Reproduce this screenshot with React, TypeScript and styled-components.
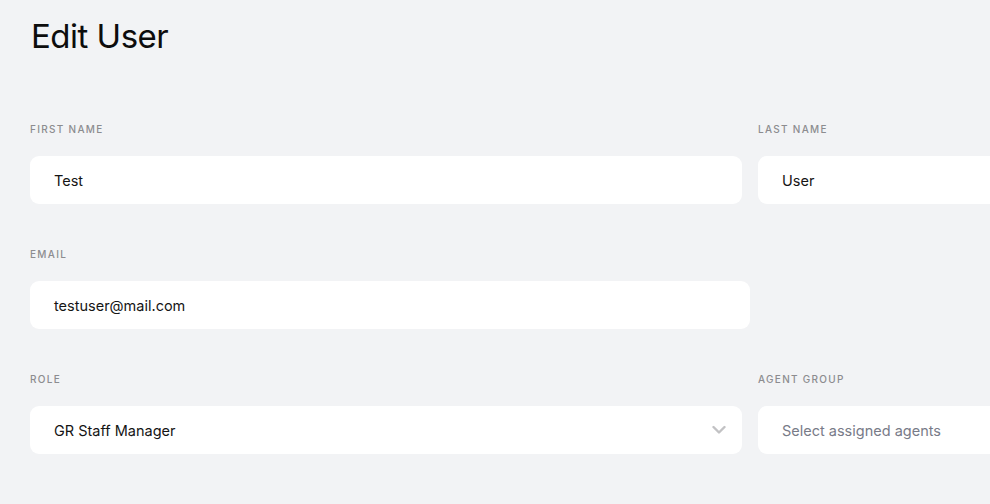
import React from 'react';
import styled, { createGlobalStyle } from 'styled-components';

const GlobalStyle = createGlobalStyle`
  html, body {
    margin: 0;
    padding: 0;
    background: #f2f3f5;
    overflow: hidden;
  }
  body {
    font-family: Inter, "Noto Sans", sans-serif;
    color: #111111;
  }
`;

const Page = styled.div`
  width: 1440px;
  padding: 14px 30px 40px;
`;

const Title = styled.h1`
  margin: 0 0 65px 1px;
  font-size: 33px;
  font-weight: 400;
  letter-spacing: -0.5px;
  line-height: 44px;
  color: #0d0d0d;
`;

const Form = styled.div`
  display: flex;
  flex-direction: column;
  gap: 44px;
`;

const Row = styled.div<{ $single?: boolean }>`
  display: grid;
  grid-template-columns: ${p => (p.$single ? '720px' : '1fr 1fr')};
  column-gap: 16px;
`;

const Field = styled.div`
  display: flex;
  flex-direction: column;
  gap: 21px;
`;

const Label = styled.label`
  font-size: 10px;
  font-weight: 500;
  letter-spacing: 1.3px;
  text-transform: uppercase;
  color: #8c8c8f;
  line-height: 12px;
`;

const Box = styled.div`
  position: relative;
  height: 48px;
  border-radius: 9px;
  background: #ffffff;
  display: flex;
  align-items: center;
  padding: 0 24px;
  box-sizing: border-box;
`;

const Value = styled.span<{ $placeholder?: boolean }>`
  font-size: 14.5px;
  color: ${p => (p.$placeholder ? '#787b88' : '#151515')};
`;

const Chevron = styled.svg`
  position: absolute;
  right: 16px;
  top: 50%;
  transform: translateY(-50%);
`;

const ChevronDown = () => (
  <Chevron width="14" height="9" viewBox="0 0 14 9" fill="none">
    <path d="M1.5 1.5L7 7L12.5 1.5" stroke="#c2c2c4" strokeWidth="2.4" strokeLinecap="round" strokeLinejoin="round" />
  </Chevron>
);

export default function App() {
  return (
    <>
      <GlobalStyle />
      <Page>
        <Title>Edit User</Title>
        <Form>
          <Row>
            <Field>
              <Label>First Name</Label>
              <Box><Value>Test</Value></Box>
            </Field>
            <Field>
              <Label>Last Name</Label>
              <Box><Value>User</Value></Box>
            </Field>
          </Row>
          <Row $single>
            <Field>
              <Label>Email</Label>
              <Box><Value>testuser@mail.com</Value></Box>
            </Field>
          </Row>
          <Row>
            <Field>
              <Label>Role</Label>
              <Box>
                <Value>GR Staff Manager</Value>
                <ChevronDown />
              </Box>
            </Field>
            <Field>
              <Label>Agent Group</Label>
              <Box><Value $placeholder>Select assigned agents</Value></Box>
            </Field>
          </Row>
        </Form>
      </Page>
    </>
  );
}
